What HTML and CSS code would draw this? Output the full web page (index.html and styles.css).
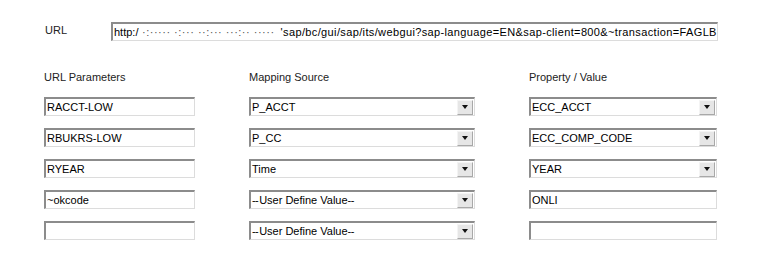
FILE: index.html
```html
<!DOCTYPE html>
<html lang="en">
<head>
    <meta charset="UTF-8">
    <title>URL Mapping</title>
    <link rel="stylesheet" href="styles.css">
</head>
<body>
    <main class="mapping">
        <div class="url-row">
            <label class="url-label" for="urlInput">URL</label>
            <div class="field url-field" id="urlInput">
                <span>http:/</span><span class="masked">&nbsp;·:····· ·:··· ··:··· ···:·· ·····</span><span class="url-path">'sap/bc/gui/sap/its/webgui?sap-language=EN&amp;sap-client=800&amp;~transaction=FAGLB</span>
            </div>
        </div>

        <div class="grid">
            <div class="col-title">URL Parameters</div>
            <div class="col-title">Mapping Source</div>
            <div class="col-title">Property / Value</div>

            <div class="field">RACCT-LOW</div>
            <div class="field select"><span>P_ACCT</span><span class="arrow"></span></div>
            <div class="field select"><span>ECC_ACCT</span><span class="arrow"></span></div>

            <div class="field">RBUKRS-LOW</div>
            <div class="field select"><span>P_CC</span><span class="arrow"></span></div>
            <div class="field select"><span>ECC_COMP_CODE</span><span class="arrow"></span></div>

            <div class="field">RYEAR</div>
            <div class="field select"><span>Time</span><span class="arrow"></span></div>
            <div class="field select"><span>YEAR</span><span class="arrow"></span></div>

            <div class="field">~okcode</div>
            <div class="field select"><span><span class="dash">--</span>User Define Value<span class="dash">--</span></span><span class="arrow"></span></div>
            <div class="field">ONLI</div>

            <div class="field"></div>
            <div class="field select"><span><span class="dash">--</span>User Define Value<span class="dash">--</span></span><span class="arrow"></span></div>
            <div class="field"></div>
        </div>
    </main>
</body>
</html>
```

FILE: styles.css
```css
* {
    margin: 0;
    padding: 0;
    box-sizing: border-box;
}

body {
    font-family: "Liberation Sans", Arial, sans-serif;
    font-size: 11px;
    color: #000;
    background: #fff;
}

.mapping {
    padding: 22px 0 0 44px;
}

.url-row {
    display: flex;
    align-items: flex-start;
}

.url-label {
    width: 67px;
    padding: 2px 0 0 1px;
    color: #222;
}

.field {
    height: 19px;
    display: flex;
    align-items: center;
    padding: 0 2px 0 1px;
    background: #fff;
    border-top: 2px solid #8c8c8c;
    border-left: 2px solid #8c8c8c;
    border-right: 1px solid #dcdcdc;
    border-bottom: 1px solid #dcdcdc;
    white-space: nowrap;
    overflow: hidden;
}

.url-field {
    width: 607px;
}

.masked {
    flex: none;
    padding-right: 6px;
    color: #555;
    letter-spacing: 0.5px;
}

.url-path {
    letter-spacing: 0.37px;
}

.grid {
    display: grid;
    grid-template-columns: 151px 226px 188px;
    column-gap: 54px;
    row-gap: 12px;
    margin-top: 30px;
}

.col-title {
    color: #222;
    margin-bottom: 2px;
}

.select {
    justify-content: space-between;
    padding-right: 1px;
}

.dash {
    letter-spacing: -0.6px;
    margin-right: 1px;
}

.arrow {
    width: 16px;
    height: 15px;
    background: #e6e6e6;
    border-top: 1px solid #f4f4f4;
    border-left: 1px solid #f4f4f4;
    border-right: 1px solid #a8a8a8;
    border-bottom: 1px solid #a8a8a8;
    display: flex;
    align-items: center;
    justify-content: center;
}

.arrow::after {
    content: "";
    border-left: 3px solid transparent;
    border-right: 3px solid transparent;
    border-top: 4px solid #111;
}
```
